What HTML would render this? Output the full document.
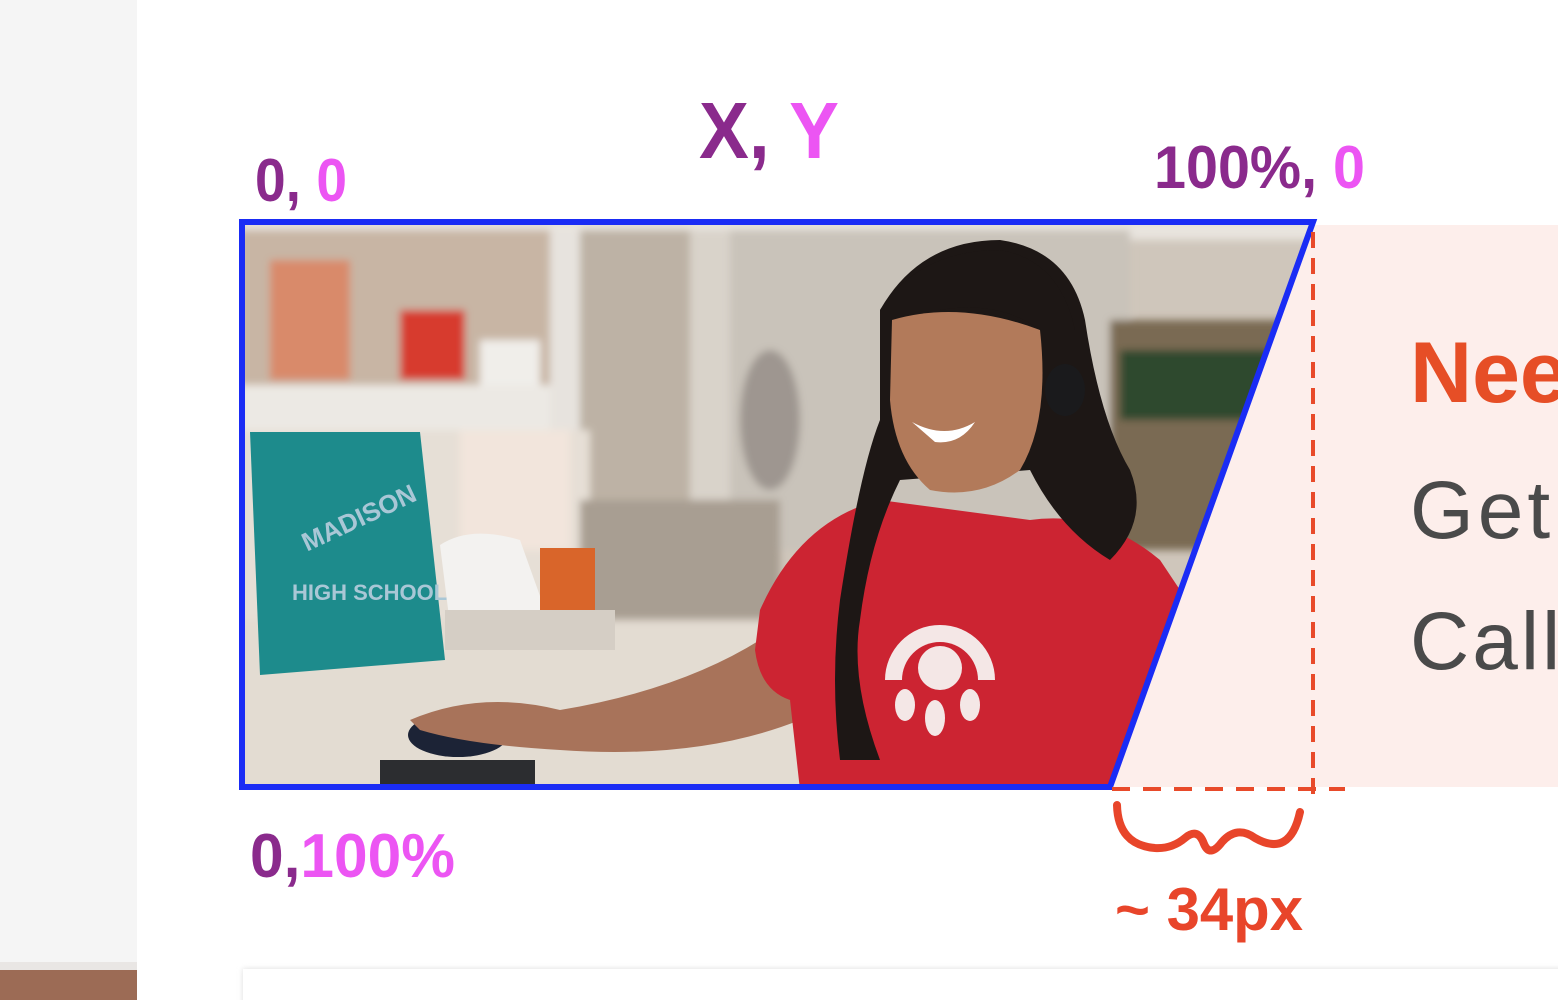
<!DOCTYPE html>
<html><head><meta charset="utf-8"><style>
html,body{margin:0;padding:0;width:1558px;height:1000px;overflow:hidden;background:#fff}
svg{display:block}
</style></head><body>
<svg width="1558" height="1000" viewBox="0 0 1558 1000" xmlns="http://www.w3.org/2000/svg">
<defs>
<clipPath id="ph"><polygon points="244,224 1311,224 1108,785 244,785"/></clipPath>
<filter id="bl"><feGaussianBlur stdDeviation="4"/></filter>
<filter id="sh"><feGaussianBlur stdDeviation="3"/></filter>
</defs>
<rect x="0" y="0" width="137" height="1000" fill="#f5f5f5"/>
<rect x="0" y="962" width="137" height="8" fill="#e9e6e4"/>
<rect x="0" y="970" width="137" height="30" fill="#9c6b55"/>
<rect x="1100" y="225" width="458" height="562" fill="#fdeeeb"/>
<g clip-path="url(#ph)">
<rect x="240" y="220" width="1080" height="570" fill="#cfc6bb"/>
<g filter="url(#bl)">
<rect x="240" y="220" width="1080" height="20" fill="#e8e4de"/>
<rect x="560" y="230" width="170" height="320" fill="#bdb2a5"/>
<rect x="690" y="230" width="40" height="330" fill="#d9d3ca"/>
<rect x="730" y="230" width="400" height="320" fill="#c9c3ba"/>
<rect x="1110" y="320" width="180" height="230" fill="#7a6a52"/>
<rect x="1120" y="350" width="150" height="70" fill="#2f4a2e"/>
<rect x="240" y="230" width="320" height="160" fill="#c8b5a4"/>
<rect x="270" y="260" width="80" height="120" fill="#d98a6a"/>
<rect x="400" y="310" width="65" height="70" fill="#d73a2f"/>
<rect x="480" y="340" width="60" height="45" fill="#f0eeea"/>
<rect x="240" y="385" width="340" height="45" fill="#ece9e4"/>
<rect x="550" y="230" width="30" height="420" fill="#e7e3de"/>
<rect x="240" y="430" width="350" height="220" fill="#e6dfd6"/>
<rect x="580" y="500" width="200" height="130" fill="#a89e92"/>
<ellipse cx="770" cy="420" rx="30" ry="70" fill="#9e9690"/>
<rect x="460" y="430" width="110" height="120" fill="#f2e5dc"/>
<rect x="240" y="620" width="640" height="170" fill="#e3dcd2"/>
</g>
<polygon points="250,432 420,432 445,660 260,675" fill="#1d8b8c"/>
<text x="300" y="540" font-family="Liberation Sans" font-weight="bold" font-size="26" fill="#a9c7d6" transform="rotate(-25 330 530)">MADISON</text>
<text x="292" y="600" font-family="Liberation Sans" font-weight="bold" font-size="22" fill="#a9c7d6">HIGH SCHOOL</text>
<path d="M440,545 Q470,525 520,540 L545,610 L450,625 Z" fill="#f3f2f0"/>
<rect x="540" y="548" width="55" height="65" fill="#d9652a"/>
<rect x="445" y="610" width="170" height="40" fill="#d5cec5"/>
<ellipse cx="458" cy="735" rx="50" ry="22" fill="#1c2336"/>
<rect x="380" y="760" width="155" height="30" fill="#2c2d30"/>
<path d="M410,720 Q480,690 560,710 Q680,690 760,640 L800,720 Q700,760 560,750 Q470,745 420,730 Z" fill="#a8735a"/>
<path d="M760,610 Q800,520 880,500 L1030,520 Q1100,510 1160,560 L1200,620 L1120,790 L800,790 L790,700 Q760,690 755,650 Z" fill="#cc2432"/>
<circle cx="940" cy="680" r="55" fill="#f4e7e6"/>
<circle cx="940" cy="680" r="38" fill="#cc2432"/>
<rect x="880" y="680" width="120" height="70" fill="#cc2432"/>
<circle cx="940" cy="668" r="22" fill="#f4e7e6"/>
<ellipse cx="905" cy="705" rx="10" ry="16" fill="#f4e7e6"/>
<ellipse cx="935" cy="718" rx="10" ry="18" fill="#f4e7e6"/>
<ellipse cx="970" cy="705" rx="10" ry="16" fill="#f4e7e6"/>
<path d="M880,310 Q920,240 1000,240 Q1070,250 1085,320 Q1100,420 1130,470 Q1150,520 1110,560 Q1060,530 1030,470 L900,480 Q870,540 860,620 Q850,680 880,760 L840,760 Q830,680 840,600 Q860,470 880,420 Z" fill="#1d1715"/>
<path d="M892,320 Q960,300 1040,330 Q1050,420 1020,470 Q980,500 930,490 Q895,460 890,400 Z" fill="#b27a5a"/>
<path d="M880,310 Q920,250 1000,250 Q1060,260 1075,330 L1040,330 Q1000,300 940,310 Z" fill="#1d1715"/>
<path d="M912,422 Q945,440 975,422 Q960,445 935,442 Z" fill="#fff"/>
<ellipse cx="1065" cy="390" rx="20" ry="26" fill="#1a1a1c"/>
</g>
<polygon points="242,222 1313,222 1110,787 242,787" fill="none" stroke="#1a2cf5" stroke-width="6" stroke-linejoin="miter"/>
<line x1="1313" y1="232" x2="1313" y2="803" stroke="#e84a2a" stroke-width="4" stroke-dasharray="16,10"/>
<line x1="1112" y1="789" x2="1345" y2="789" stroke="#e84a2a" stroke-width="4" stroke-dasharray="18,13"/>
<path d="M1117,805 Q1118,845 1155,848 Q1172,849 1185,838 Q1198,827 1204,844 Q1210,858 1222,842 Q1237,825 1255,838 Q1290,858 1300,812" fill="none" stroke="#e8452a" stroke-width="8" stroke-linecap="round"/>
<g font-family="Liberation Sans, sans-serif" font-weight="bold">
<text x="699" y="158" font-size="80" textLength="140" lengthAdjust="spacingAndGlyphs"><tspan fill="#8a2a8c">X, </tspan><tspan fill="#ec55f3">Y</tspan></text>
<text x="255" y="201" font-size="60" textLength="92" lengthAdjust="spacingAndGlyphs"><tspan fill="#8a2a8c">0, </tspan><tspan fill="#ec55f3">0</tspan></text>
<text x="1154" y="188" font-size="60" textLength="211" lengthAdjust="spacingAndGlyphs"><tspan fill="#8a2a8c">100%, </tspan><tspan fill="#ec55f3">0</tspan></text>
<text x="250" y="877" font-size="62" textLength="205" lengthAdjust="spacingAndGlyphs"><tspan fill="#8a2a8c">0,</tspan><tspan fill="#ec55f3">100%</tspan></text>
<text x="1115" y="930" font-size="60" fill="#e8452a" textLength="188" lengthAdjust="spacingAndGlyphs">~ 34px</text>
</g>
<g font-family="Liberation Sans, sans-serif">
<text x="1410" y="402" font-size="86" font-weight="bold" fill="#e64e26">Need</text>
<text x="1410" y="538" font-size="82" fill="#4a4a4a" letter-spacing="4">Get</text>
<text x="1410" y="669" font-size="82" fill="#4a4a4a" letter-spacing="3">Call</text>
</g>
<rect x="243" y="969" width="1330" height="60" fill="#ddd" filter="url(#sh)"/>
<rect x="243" y="969" width="1330" height="60" fill="#fff"/>
</svg>
</body></html>
